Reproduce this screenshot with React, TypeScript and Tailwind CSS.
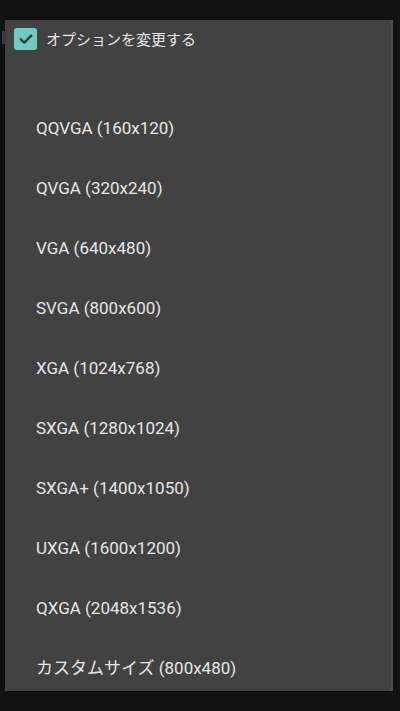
const sizes = [
  "QQVGA (160x120)",
  "QVGA (320x240)",
  "VGA (640x480)",
  "SVGA (800x600)",
  "XGA (1024x768)",
  "SXGA (1280x1024)",
  "SXGA+ (1400x1050)",
  "UXGA (1600x1200)",
  "QXGA (2048x1536)",
  "カスタムサイズ (800x480)",
];

const font = { fontFamily: "Roboto, 'Noto Sans CJK JP', sans-serif" };

export default function App() {
  return (
    <div className="relative w-[400px] h-[711px] bg-[#111111] overflow-hidden" style={font}>
      {/* peek of the view behind the dialog */}
      <div className="absolute left-[2px] top-[31px] w-[4px] h-[13px] bg-[#3a3a3a]" />

      <div className="pt-[20px] pl-[5px]">
        <div className="w-[388px] h-[671px] bg-[#424242] overflow-hidden border-r-2 border-[#4c4c4c]">
          {/* Header */}
          <div className="h-[79px] pt-[8px] pl-[9px]">
            <div className="flex items-center gap-[9px]">
              <div className="w-[23px] h-[22px] rounded-[3px] bg-[#72cbbf] flex items-center justify-center">
                <svg viewBox="0 0 24 24" className="w-[18px] h-[18px]" fill="none" stroke="#2f3a3a" strokeWidth="3.2" strokeLinecap="round" strokeLinejoin="round">
                  <path d="M5 12.5l4.5 4.5L19 7.5" />
                </svg>
              </div>
              <span className="text-[15px] text-[#e8e8e8] leading-none pt-[2px]">オプションを変更する</span>
            </div>
          </div>

          {/* Size list */}
          <div className="flex flex-col">
            {sizes.map((s) => (
              <div key={s} className="h-[60px] flex items-center pl-[31px] text-[17px] text-[#e6e6e6]">
                {s}
              </div>
            ))}
          </div>
        </div>
      </div>
    </div>
  );
}
